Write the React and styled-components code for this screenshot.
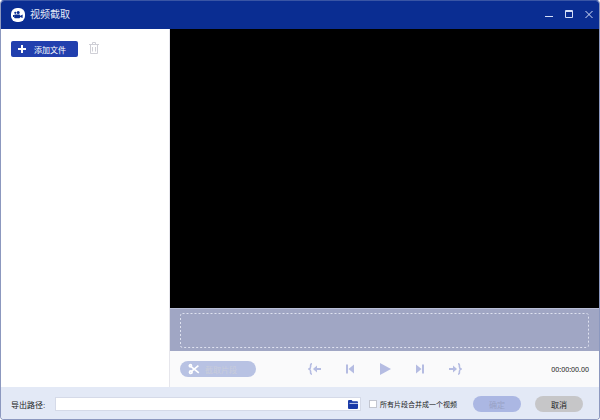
import React, { useState } from "react";
import styled, { createGlobalStyle } from "styled-components";

const App = () => {
const [path, setPath] = useState("");
const [merge, setMerge] = useState(false);

  return (
    <StyledWindow>
      <GlobalStyle />
      <StyledTitleBar>
        <CameraLogo />
        <h1>视频截取</h1>
        <StyledWindowButton aria-label="最小化">
          <svg width="10" height="10"><path d="M1 6.5h8" /></svg>
        </StyledWindowButton>
        <StyledWindowButton aria-label="最大化">
          <svg width="10" height="10"><path d="M1.5 .5h7v7h-7zM1 1.5h8" /></svg>
        </StyledWindowButton>
        <StyledWindowButton aria-label="关闭">
          <svg width="10" height="10"><path d="M1.5 1l7 7M8.5 1l-7 7" /></svg>
        </StyledWindowButton>
      </StyledTitleBar>

      <StyledMain>
        <StyledSideBar>
          <StyledAddButton>
            <svg width="8" height="8"><path d="M4 0v8M0 4h8" stroke="#fff" strokeWidth="2" /></svg>
            添加文件
          </StyledAddButton>
          <StyledIconButton aria-label="删除">
            <TrashIcon />
          </StyledIconButton>
        </StyledSideBar>

        <StyledEditor>
          <StyledVideo />
          <StyledTimeline>
            {/* svg rect keeps the dashes short and even */}
            <svg width="100%" height="100%">
              <rect x="0.5" y="0.5" width="100%" height="100%" rx="2" />
            </svg>
          </StyledTimeline>
          <StyledControls>
            <StyledClipButton disabled>
              <ScissorsIcon />
              截取片段
            </StyledClipButton>
            <StyledPlayer>
              <StyledIconButton aria-label="设为起点"><MarkIcon /></StyledIconButton>
              <StyledIconButton aria-label="上一帧"><StepIcon /></StyledIconButton>
              <StyledIconButton aria-label="播放">
                <svg width="14" height="14"><path d="M2 1l11 6-11 6z" fill="#b5bce2" /></svg>
              </StyledIconButton>
              <StyledIconButton aria-label="下一帧"><StepIcon flip /></StyledIconButton>
              <StyledIconButton aria-label="设为终点"><MarkIcon flip /></StyledIconButton>
            </StyledPlayer>
            <StyledTime>00:00:00.00</StyledTime>
          </StyledControls>
        </StyledEditor>
      </StyledMain>

      <StyledFooter>
        <label htmlFor="path">导出路径:</label>
        <StyledPathField>
          <input id="path" type="text" value={path} onChange={(e) => setPath(e.target.value)} />
          <StyledIconButton aria-label="选择文件夹">
            <FolderIcon />
          </StyledIconButton>
        </StyledPathField>
        <StyledCheck>
          <input type="checkbox" checked={merge} onChange={() => setMerge(!merge)} />
          所有片段合并成一个视频
        </StyledCheck>
        <StyledFooterButton $primary disabled>确定</StyledFooterButton>
        <StyledFooterButton>取消</StyledFooterButton>
      </StyledFooter>
    </StyledWindow>
  );
};

const CameraLogo = () => (
  <svg width="14" height="14" viewBox="0 0 14 14">
    <rect width="14" height="14" rx="6" fill="#fff" />
    <g fill="#0a2d92">
      <circle cx="4.3" cy="4.8" r="1.1" />
      <circle cx="7.2" cy="4.4" r="1.5" />
      <rect x="3.2" y="6.4" width="5.8" height="3.8" rx=".8" />
      <path d="M9 8l2.6-1.4v3.4L9 9z" />
      <path d="M2 7h1v2H2z" />
    </g>
  </svg>
);

const TrashIcon = () => (
  <svg width="10" height="12" viewBox="0 0 10 12" fill="none" stroke="#cfcfd6">
    <path d="M0 2.5h10M3.5 2V.5h3V2M1.5 3v8.5h7V3M3.5 5v4.5M6.5 5v4.5" />
  </svg>
);

const ScissorsIcon = () => (
  <svg width="12" height="12" viewBox="0 0 12 12" fill="none" stroke="#fff" strokeWidth="1.7">
    <circle cx="2.4" cy="2.8" r="1.1" />
    <circle cx="2.8" cy="9.2" r="1.3" />
    <path d="M3.4 3.8l7.4 6M3.8 8.2l6.6-5.6" />
  </svg>
);

const MarkIcon = ({ flip }) => (
  <svg width="14" height="14" viewBox="0 0 14 14" fill="none" stroke="#b5bce2" strokeWidth="1.6">
    <g transform={flip ? "matrix(-1 0 0 1 14 0)" : undefined}>
      <path d="M4 1.8C2.4 1.8 2.6 3 2.6 4.5S2.2 6.6 1 7c1.2.4 1.6 1 1.6 2.5S2.4 12.2 4 12.2" />
      <path d="M13 7H6" strokeWidth="2" />
      <path d="M9 3.6v6.8L5 7z" fill="#b5bce2" stroke="none" />
    </g>
  </svg>
);

const StepIcon = ({ flip }) => (
  <svg width="14" height="14" viewBox="0 0 14 14" fill="#b5bce2">
    <g transform={flip ? "matrix(-1 0 0 1 14 0)" : undefined}>
      <path d="M3 2.5h2v9H3zM11 2.5v9L5.5 7z" />
    </g>
  </svg>
);

const FolderIcon = () => (
  <svg width="10" height="9" viewBox="0 0 10 9">
    <path d="M0 1.2Q0 0 1 0h2.6l1 1.2H9q1 0 1 1V8q0 1-1 1H1Q0 9 0 8z" fill="#1b3ba8" />
    <path d="M1.5 3.4H10" stroke="#dfe5f7" strokeWidth=".9" />
  </svg>
);

const GlobalStyle = createGlobalStyle`
* {
  box-sizing:border-box;
}
body{
  margin:0;
  font-family:"Liberation Sans", "Noto Sans CJK SC", sans-serif;
  font-size:8px;
  color:#222;
}
button, input{
  font:inherit;
  margin:0;
  padding:0;
}
button{
  border:none;
  background:none;
}
svg{
  display:block;
  flex:none;
}
`

const StyledWindow = styled.div`
display:flex;
flex-direction:column;
min-height:100vh;
border:1px solid #8c98bf;
border-top-color:#3955a5;
border-radius:4px;
overflow:hidden;
`

const StyledTitleBar = styled.header`
display:flex;
align-items:center;
height:28px;
padding:0 0 0 10px;
background:#0a2d92;
h1{
  flex:1;
  margin:0 0 0 5px;
  font-size:10px;
  font-weight:400;
  line-height:12px;
  color:#e6ebf8;
}
`

const StyledWindowButton = styled.button`
display:flex;
align-items:center;
justify-content:center;
width:20px;
height:20px;
svg{
  fill:none;
  stroke:#d5def7;
}
`

const StyledMain = styled.main`
display:flex;
flex:1;
`

const StyledSideBar = styled.aside`
display:flex;
align-items:flex-start;
gap:11px;
width:168px;
padding:12px 10px;
background:#fff;
`

const StyledAddButton = styled.button`
display:flex;
align-items:center;
gap:8px;
width:67px;
height:16px;
padding-left:7px;
border-radius:2px;
background:#213fae;
color:#fff;
`

const StyledIconButton = styled.button`
display:flex;
align-items:center;
justify-content:center;
min-height:14px;
`

const StyledEditor = styled.section`
display:flex;
flex-direction:column;
flex:1;
border-left:1px solid #e6e6ec;
background:#fafafb;
`

const StyledVideo = styled.div`
flex:1;
background:#000;
`

const StyledTimeline = styled.div`
height:43px;
padding:4px 11px 4px 10px;
border-top:1px solid #b9bfd8;
background:#a0a6c4;
svg{
  overflow:visible;
}
rect{
  fill:none;
  stroke:#dfe2f0;
  stroke-dasharray:2 2;
}
`

const StyledControls = styled.div`
display:grid;
grid-template-columns:1fr auto 1fr;
align-items:center;
height:36px;
padding:0 10px;
`

const StyledClipButton = styled.button`
display:flex;
align-items:center;
gap:5px;
width:76px;
height:16px;
padding-left:8px;
border-radius:8px;
background:#b8c2e3;
color:#c8ccda;
`

const StyledPlayer = styled.div`
display:flex;
align-items:center;
gap:21px;
`

const StyledTime = styled.time`
justify-self:end;
font-family:"Noto Sans", sans-serif;
font-size:7px;
`

const StyledFooter = styled.footer`
display:flex;
align-items:center;
height:32px;
padding:2px 16px 0 10px;
background:#e3e9f6;
`

const StyledPathField = styled.div`
display:flex;
flex:1;
align-items:center;
height:14px;
margin:0 8px 0 10px;
padding-right:2px;
border:1px solid #d5dae8;
background:#fff;
input{
  flex:1;
  min-width:0;
  border:none;
  outline:none;
  background:none;
}
`

const StyledCheck = styled.label`
display:flex;
align-items:center;
gap:3px;
margin-right:2px;
font-size:7px;
input{
  appearance:none;
  width:8px;
  height:8px;
  border:1px solid #c3c6d0;
  background:#fff;
}
input:checked{
  background:#213fae;
}
`

const StyledFooterButton = styled.button`
width:48px;
height:16px;
margin-left:14px;
border-radius:8px;
background:${(props) => (props.$primary ? "#abb7e3" : "#c6c6c8")};
color:${(props) => (props.$primary ? "#98a2c6" : "#222")};
`

export default App;
